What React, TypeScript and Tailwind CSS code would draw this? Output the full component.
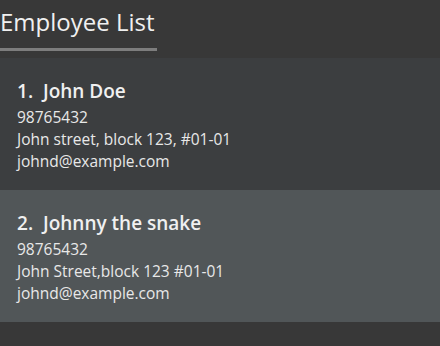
import React from 'react';

interface Employee {
  name: string;
  phone: string;
  address: string;
  email: string;
}

const employees: Employee[] = [
  { name: 'John Doe', phone: '98765432', address: 'John street, block 123, #01-01', email: 'johnd@example.com' },
  { name: 'Johnny the snake', phone: '98765432', address: 'John Street,block 123 #01-01', email: 'johnd@example.com' },
];

const EmployeeCard: React.FC<{ index: number; employee: Employee; selected?: boolean }> = ({ index, employee, selected }) => (
  <div className={`h-[132px] pl-[17px] pt-[20px] ${selected ? 'bg-[#515658]' : 'bg-[#3c3e40]'}`}>
    <div className="text-[19px] font-semibold leading-[27px] text-[#f0f0f0]">
      {index}.&nbsp;&nbsp;{employee.name}
    </div>
    <div className="mt-[1px] text-[15.5px] leading-[22px] text-[#e8e8e8]">
      <div>{employee.phone}</div>
      <div>{employee.address}</div>
      <div>{employee.email}</div>
    </div>
  </div>
);

export default function App() {
  return (
    <div className="w-[440px] h-[346px] bg-[#383838] overflow-hidden" style={{ fontFamily: '"Open Sans", "Noto Sans", sans-serif' }}>
      <div className="h-[58px]">
        <div className="inline-block w-[157px] h-[51px] border-b-[3px] border-[#7d7d7d] pt-[6px]">
          <span className="text-[24px] leading-[32px] text-[#f0f0f0]">Employee List</span>
        </div>
      </div>
      {employees.map((e, i) => (
        <EmployeeCard key={i} index={i + 1} employee={e} selected={i === 1} />
      ))}
    </div>
  );
}
